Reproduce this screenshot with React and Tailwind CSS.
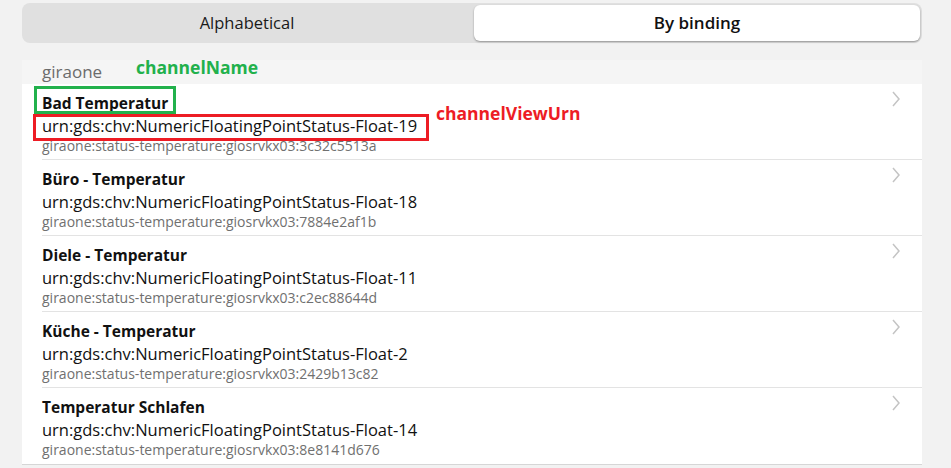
import React from "react";

const rows = [
  ["Bad Temperatur", "urn:gds:chv:NumericFloatingPointStatus-Float-19", "giraone:status-temperature:giosrvkx03:3c32c5513a"],
  ["Büro - Temperatur", "urn:gds:chv:NumericFloatingPointStatus-Float-18", "giraone:status-temperature:giosrvkx03:7884e2af1b"],
  ["Diele - Temperatur", "urn:gds:chv:NumericFloatingPointStatus-Float-11", "giraone:status-temperature:giosrvkx03:c2ec88644d"],
  ["Küche - Temperatur", "urn:gds:chv:NumericFloatingPointStatus-Float-2", "giraone:status-temperature:giosrvkx03:2429b13c82"],
  ["Temperatur Schlafen", "urn:gds:chv:NumericFloatingPointStatus-Float-14", "giraone:status-temperature:giosrvkx03:8e8141d676"],
];

function Chevron() {
  return (
    <svg width="10" height="16" viewBox="0 0 10 16" className="shrink-0">
      <polyline points="2,1 8,8 2,15" fill="none" stroke="#c4c4c4" strokeWidth="1.5" />
    </svg>
  );
}

export default function App() {
  return (
    <div
      className="w-[951px] h-[468px] bg-[#f2f2f2] overflow-hidden"
      style={{ fontFamily: '"Open Sans", "Noto Sans", sans-serif' }}
    >
      <div className="ml-[22px] w-[900px] pt-[3px]">
        <div className="h-[40px] bg-[#e0e0e0] rounded-lg p-[2px] grid grid-cols-2 gap-[4px]">
          <div className="flex items-center justify-center text-[16.5px] text-[#1a1a1a]">Alphabetical</div>
          <div className="flex items-center justify-center text-[17px] font-semibold text-[#111] bg-white rounded-md shadow-[0_1px_2px_rgba(0,0,0,0.35)]">
            By binding
          </div>
        </div>

        <div className="relative mt-[17px] bg-white border-b border-[#d6d6d6]">
          <div className="h-[24px] bg-[#f5f5f5] pl-5 text-[17px] leading-[24px] text-[#6b6b6b]">giraone</div>
          {rows.map((r, i) => (
            <div key={i} className="pl-5">
              <div
                className={
                  "h-[76px] flex items-start pr-5 " +
                  (i < rows.length - 1 ? "border-b border-[#e3e3e3]" : "")
                }
              >
                <div className="flex-1 pt-[8px]">
                  <div className="text-[15.5px] leading-[22px] font-bold text-[#111]">{r[0]}</div>
                  <div className="text-[16.5px] leading-[23px] text-[#111]">{r[1]}</div>
                  <div className="text-[14px] leading-[17px] text-[#707070]">{r[2]}</div>
                </div>
                <div className="pt-[7px] pr-[1px]">
                  <Chevron />
                </div>
              </div>
            </div>
          ))}

          <div className="absolute left-[12px] top-[26px] w-[142px] h-[28px] border-[3px] border-[#22b14c]" />
          <div className="absolute left-[11px] top-[54px] w-[396px] h-[27px] border-[3px] border-[#ed1c24]" />
          <div className="absolute left-[114px] top-[-4px] text-[17.5px] font-bold text-[#22b14c] leading-[22px]">channelName</div>
          <div className="absolute left-[414px] top-[42px] text-[17.5px] font-bold text-[#ed1c24] leading-[22px]">channelViewUrn</div>
        </div>
      </div>
    </div>
  );
}
